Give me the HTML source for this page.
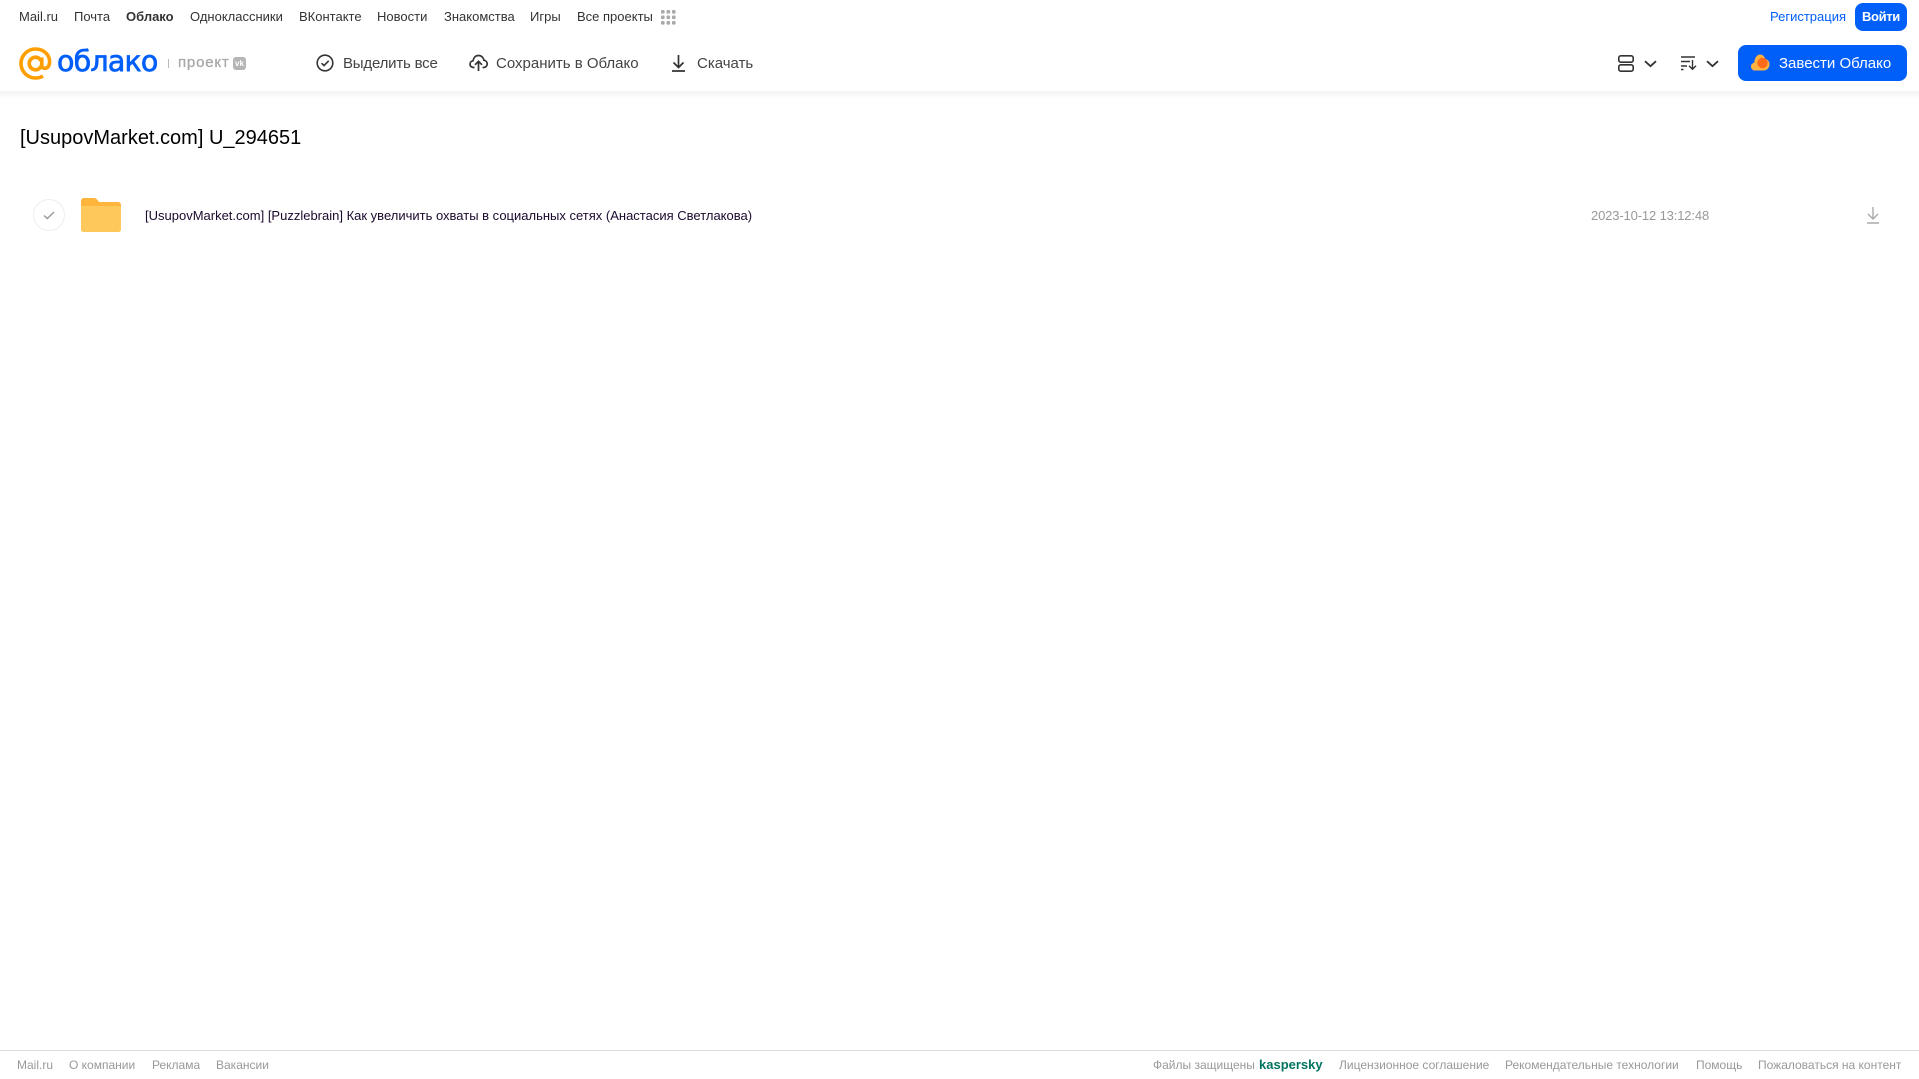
<!DOCTYPE html>
<html lang="ru"><head><meta charset="utf-8"><title>Облако</title>
<style>
html,body{margin:0;padding:0;background:#fff;width:1919px;height:1079px;overflow:hidden}
body{position:relative;font-family:"Liberation Sans",sans-serif}
.t{position:absolute;white-space:nowrap;line-height:16px}
.n{font-size:13px;color:#333;top:9px}
.b{font-size:15px;color:#444;top:56px;line-height:16px}
.f{font-size:12px;color:#999;top:1057px}
svg{position:absolute;display:block;overflow:visible}
</style></head><body>
<div style="position:absolute;left:0;top:91px;width:1919px;height:8px;background:linear-gradient(#f3f3f3,#fff)"></div>

<span class="t n" style="left:19px">Mail.ru</span>
<span class="t n" style="left:74px">Почта</span>
<span class="t n" style="left:126px;font-weight:bold">Облако</span>
<span class="t n" style="left:190px">Одноклассники</span>
<span class="t n" style="left:299px">ВКонтакте</span>
<span class="t n" style="left:377px">Новости</span>
<span class="t n" style="left:444px">Знакомства</span>
<span class="t n" style="left:530px">Игры</span>
<span class="t n" style="left:577px">Все проекты</span>
<svg style="left:661px;top:10px" width="15" height="15" fill="#aaa"><rect x="0" y="0" width="3.6" height="3.6" rx="1"/><rect x="5.5" y="0" width="3.6" height="3.6" rx="1"/><rect x="11" y="0" width="3.6" height="3.6" rx="1"/><rect x="0" y="5.5" width="3.6" height="3.6" rx="1"/><rect x="5.5" y="5.5" width="3.6" height="3.6" rx="1"/><rect x="11" y="5.5" width="3.6" height="3.6" rx="1"/><rect x="0" y="11" width="3.6" height="3.6" rx="1"/><rect x="5.5" y="11" width="3.6" height="3.6" rx="1"/><rect x="11" y="11" width="3.6" height="3.6" rx="1"/></svg>

<span class="t n" style="left:1770px;color:#005ff9">Регистрация</span>
<div style="position:absolute;left:1855px;top:3px;width:52px;height:28px;border-radius:8px;background:#005ff9"></div>
<span class="t n" style="left:1862px;color:#fff;font-weight:bold;letter-spacing:-.35px">Войти</span>

<svg style="left:19px;top:47px" width="33" height="33" viewBox="0 0 33 33" fill="none" stroke="#ff9e00" stroke-width="3.6"><circle cx="16.5" cy="16.5" r="6.3"/><path d="M22.8 10.5V18.5c0 3.6 5.8 4 7.300-.5C32.400 9 25.500 2 16.500 2 8.500 2 2 8.500 2 16.500S8.500 31 16.500 31c3 0 5.300-.7 7.500-2"/></svg>
<span class="t" style="left:57px;top:44px;font-size:28.5px;line-height:36px;color:#005ff9;font-family:'DejaVu Sans',sans-serif;letter-spacing:-.8px;-webkit-text-stroke:.7px #005ff9">облако</span>
<div style="position:absolute;left:168px;top:59px;width:1px;height:9px;background:#bbb"></div>
<span class="t" style="left:178px;top:55px;font-size:15px;color:#a8a8a8;letter-spacing:.8px;-webkit-text-stroke:.3px #a8a8a8">проект</span>
<div style="position:absolute;left:233px;top:57px;width:13px;height:13px;border-radius:3px;background:#b5b5b5;color:#fff;font-size:8px;line-height:13px;font-weight:bold;text-align:center">vk</div>

<svg style="left:316px;top:54px" width="18" height="18" fill="none" stroke="#333" stroke-width="1.600"><circle cx="9" cy="9" r="7.800"/><path d="M5.500 9.200l2.500 2.400 4.700-4.800"/></svg>
<span class="t b" style="left:343px;letter-spacing:-.2px">Выделить все</span>
<svg style="left:469px;top:54px" width="19" height="18" fill="none" stroke="#333" stroke-width="1.700"><path d="M5.500 13.500H4.500C2.500 13.500 1 12 1 10.200c0-1.800 1.300-3.200 3-3.400C4.600 3.500 6.800 1.500 9.500 1.500c2.800 0 5 2 5.400 4.700 2 .3 3.300 1.900 3.300 3.800 0 2-1.600 3.500-3.600 3.500h-1"/><path d="M9.500 17V8M6 10.800l3.500-3.500 3.500 3.500"/></svg>
<span class="t b" style="left:496px">Сохранить в Облако</span>
<svg style="left:671px;top:54px" width="15" height="18" fill="none" stroke="#333" stroke-width="1.700"><path d="M7.500 1v12M2.500 8.500l5 5 5-5M1 17h13"/></svg>
<span class="t b" style="left:697px">Скачать</span>

<svg style="left:1618px;top:55px" width="16" height="17" fill="none" stroke="#333" stroke-width="1.600"><rect x=".8" y=".8" width="14.400" height="6.400" rx="2"/><rect x=".8" y="9.800" width="14.400" height="6.400" rx="2"/></svg>
<svg style="left:1644px;top:60px" width="13" height="8" fill="none" stroke="#333" stroke-width="1.800"><path d="M1 1.200l5.500 5 5.500-5"/></svg>
<svg style="left:1681px;top:56px" width="17" height="14" fill="none" stroke="#333" stroke-width="1.400"><path d="M0 1h14M0 5.500h9M0 10h6M0 13.500h2.500M11.500 4v9M8 9.800l3.500 3.500 3.500-3.500"/></svg>
<svg style="left:1706px;top:60px" width="13" height="8" fill="none" stroke="#333" stroke-width="1.800"><path d="M1 1.200l5.500 5 5.500-5"/></svg>
<div style="position:absolute;left:1738px;top:45px;width:169px;height:36px;border-radius:8px;background:#005ff9"></div>
<svg style="left:1751px;top:54px" width="19" height="17"><path d="M4 16.500C1.800 16.500 0 14.800 0 12.600c0-2 1.400-3.500 3.200-3.800C3.500 4 6 .5 9 .5c2.500 0 4.500 1.800 5 4.200 2.500.6 4.500 2.500 4.500 5.500 0 3.500-2.700 6.300-6 6.300z" fill="#ffb340"/><circle cx="11.500" cy="9" r="5.200" fill="#ff6a1a"/></svg>
<span class="t" style="left:1779px;top:56px;font-size:15px;color:#fff">Завести Облако</span>

<span class="t" style="left:20px;top:125px;font-size:20px;line-height:26px;color:#000">[UsupovMarket.com] U_294651</span>

<div style="position:absolute;left:33px;top:199px;width:30px;height:30px;border:1px solid #eee;border-radius:50%"></div>
<svg style="left:43px;top:211px" width="12" height="9" fill="none" stroke="#999" stroke-width="1.400"><path d="M1 4.500l3.300 3L11 1"/></svg>
<svg style="left:81px;top:198px" width="40" height="34"><path d="M0 3C0 1.300 1.300 0 3 0h10c1.500 0 2.500.7 3.500 2l1.500 2h19c1.700 0 3 1.300 3 3v24c0 1.700-1.300 3-3 3H3c-1.700 0-3-1.300-3-3z" fill="#ffb43c"/><path d="M0 8h40v23c0 1.700-1.300 3-3 3H3c-1.700 0-3-1.300-3-3z" fill="#ffc85a"/></svg>
<span class="t" style="left:145px;top:208px;font-size:13px;color:#1a0a2e">[UsupovMarket.com] [Puzzlebrain] Как увеличить охваты в социальных сетях (Анастасия Светлакова)</span>
<span class="t" style="left:1591px;top:208px;font-size:13px;letter-spacing:-.14px;color:#999">2023-10-12 13:12:48</span>
<svg style="left:1866px;top:207px" width="14" height="17" fill="none" stroke="#aaa" stroke-width="1.400"><path d="M7 0v11.500M2 7l5 5 5-5M1 16h12"/></svg>

<div style="position:absolute;left:0;top:1050px;width:1919px;height:1px;background:#ddd"></div>
<span class="t f" style="left:17px">Mail.ru</span>
<span class="t f" style="left:69px">О компании</span>
<span class="t f" style="left:152px">Реклама</span>
<span class="t f" style="left:216px">Вакансии</span>
<span class="t f" style="left:1153px">Файлы защищены</span>
<span class="t f" style="left:1259px;color:#00745f;font-weight:bold;font-size:13px">kaspersky</span>
<span class="t f" style="left:1339px">Лицензионное соглашение</span>
<span class="t f" style="left:1505px">Рекомендательные технологии</span>
<span class="t f" style="left:1696px">Помощь</span>
<span class="t f" style="left:1758px">Пожаловаться на контент</span>
</body></html>
